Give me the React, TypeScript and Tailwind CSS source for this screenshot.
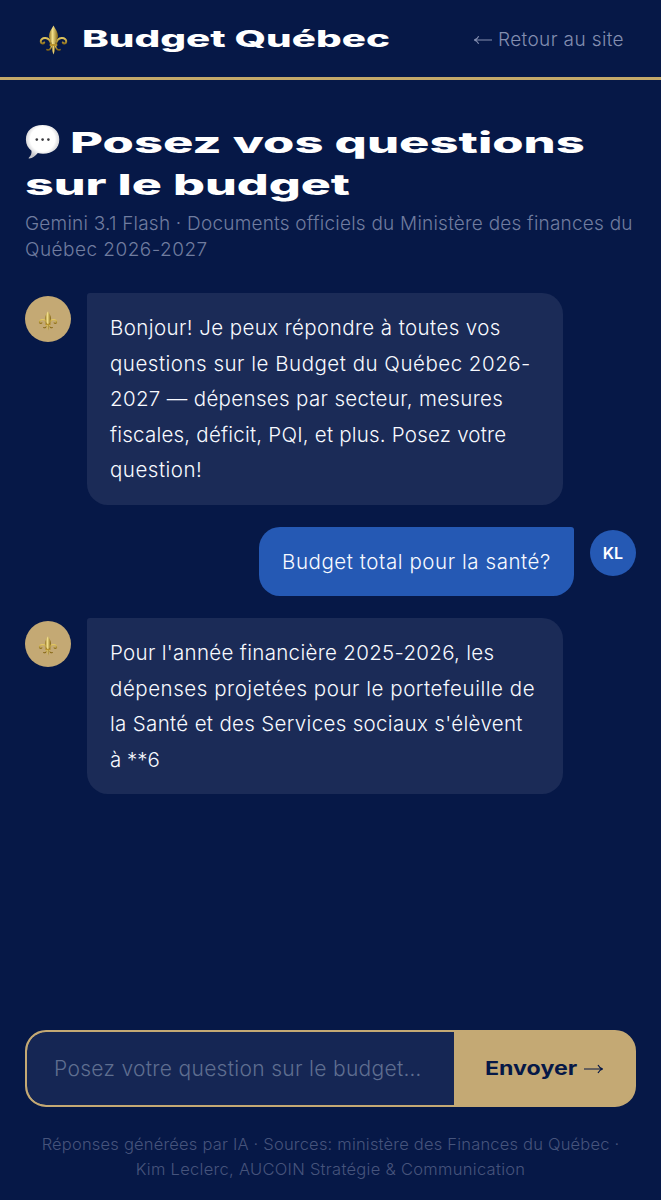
import { useState } from 'react'
import type { ReactNode } from 'react'

type Line = { text: string; tracking: string }

type Message = {
  id: number
  role: 'bot' | 'user'
  lines: Line[]
}

const MESSAGES: Message[] = [
  {
    id: 1,
    role: 'bot',
    lines: [
      { text: 'Bonjour! Je peux répondre à toutes vos', tracking: 'tracking-[0.41px]' },
      { text: 'questions sur le Budget du Québec 2026-', tracking: 'tracking-[0.51px]' },
      { text: '2027 — dépenses par secteur, mesures', tracking: 'tracking-[0.34px]' },
      { text: 'fiscales, déficit, PQI, et plus. Posez votre', tracking: 'tracking-[0.22px]' },
      { text: 'question!', tracking: 'tracking-[0.5px]' },
    ],
  },
  { id: 2, role: 'user', lines: [{ text: 'Budget total pour la santé?', tracking: 'tracking-[0.57px]' }] },
  {
    id: 3,
    role: 'bot',
    lines: [
      { text: "Pour l'année financière 2025-2026, les", tracking: 'tracking-[0.31px]' },
      { text: 'dépenses projetées pour le portefeuille de', tracking: 'tracking-[0.54px]' },
      { text: "la Santé et des Services sociaux s'élèvent", tracking: 'tracking-[0.33px]' },
      { text: 'à **6', tracking: 'tracking-normal' },
    ],
  },
]

function FleurDeLis({ className }: { className: string }) {
  return (
    <svg viewBox="0 0 28 30" className={className}>
      <defs>
        <linearGradient id="petal" x1="0" y1="0" x2="1" y2="0">
          <stop offset="0" stopColor="#8f6f1e" />
          <stop offset="0.4" stopColor="#f3e08a" />
          <stop offset="1" stopColor="#80600f" />
        </linearGradient>
        <linearGradient id="scroll" x1="0" y1="0" x2="0" y2="1">
          <stop offset="0" stopColor="#e3c860" />
          <stop offset="1" stopColor="#80600f" />
        </linearGradient>
      </defs>
      <g fill="none" stroke="url(#scroll)" strokeLinecap="round">
        <path d="M11.800 20C11 15.500 8.700 13 5.700 13C2.700 13 1 14.800 1.300 16.800C1.600 18.800 4 19.100 4.700 17.500" strokeWidth="2" />
        <path d="M16.200 20C17 15.500 19.300 13 22.300 13C25.300 13 27 14.800 26.700 16.800C26.400 18.800 24 19.100 23.300 17.500" strokeWidth="2" />
        <path d="M12 21C11.500 24.300 9.500 25.700 7.500 24.700M16 21C16.500 24.300 18.500 25.700 20.500 24.700" strokeWidth="1.600" />
      </g>
      <path d="M14 .5C12 4 9.400 7.500 9.400 11C9.400 14 11.800 16 12.400 19.500H15.600C16.200 16 18.600 14 18.600 11C18.600 7.500 16 4 14 .5Z" fill="url(#petal)" />
      <rect x="10" y="19" width="8" height="2" rx="1" fill="#b8922c" />
      <path d="M12.500 21H15.500L15.300 26L14 29.500L12.700 26Z" fill="url(#petal)" />
    </svg>
  )
}

function SpeechBubble() {
  return (
    <svg viewBox="0 0 36 36" className="mb-[2px] h-[36px] w-[36px] shrink-0">
      <defs>
        <radialGradient id="bubble" cx="0.5" cy="0.42" r="0.56">
          <stop offset="0.65" stopColor="#ffffff" />
          <stop offset="1" stopColor="#c4c4c8" />
        </radialGradient>
      </defs>
      <path d="M17.500 1C27.500 1 34.300 6.500 34.300 15.500C34.300 24.500 27.500 29.700 18 29.700C16 29.700 14.300 29.500 12.800 29.100C10.500 32 7.500 34.300 4.300 34.600C3.500 34.600 3.400 34 4 33.500C6 31.700 6.700 29.500 6.500 26.700C3 24.200 .9 20.500 .9 15.500C.9 6.500 7.700 1 17.500 1Z" fill="url(#bubble)" />
      <circle cx="11.800" cy="15.600" r="1.300" fill="#3b3b3f" />
      <circle cx="17.600" cy="15.600" r="1.300" fill="#3b3b3f" />
      <circle cx="23.400" cy="15.600" r="1.300" fill="#3b3b3f" />
    </svg>
  )
}

function Arrow({ className }: { className: string }) {
  return (
    <svg viewBox="0 0 20 12" className={className} fill="none" stroke="currentColor" strokeWidth="1.200">
      <path d="M0 6H18.500M14 2C15 4 16.500 5.500 18.800 6C16.500 6.500 15 8 14 10" />
    </svg>
  )
}

// extended display lettering
function Wide({ className, children }: { className: string; children: ReactNode }) {
  return <span className={`inline-block origin-left whitespace-nowrap ${className}`}>{children}</span>
}

function ChatMessage({ message }: { message: Message }) {
  const isUser = message.role === 'user'
  return (
    <div className={`flex items-start gap-4 ${isUser ? 'flex-row-reverse' : ''}`}>
      <div className={`mt-[3px] flex h-[46px] w-[46px] shrink-0 items-center justify-center rounded-full ${isUser ? 'bg-[#2559b4]' : 'bg-[#c4a974]'}`}>
        {isUser
          ? <span className="text-[16px] font-semibold text-white">KL</span>
          : <FleurDeLis className="mt-[4px] h-[20px] w-[20px]" />}
      </div>
      <div className={`px-[23px] py-[17px] text-[20.5px] leading-[35.5px] font-light text-[#f8faff] ${isUser ? 'w-[315px] rounded-[21px] rounded-tr-[3px] bg-[#2559b4]' : 'w-[476px] rounded-[21px] rounded-tl-[3px] bg-[#1b2b57]'}`}>
        {message.lines.map(l => (
          <div key={l.text} className={`whitespace-nowrap ${l.tracking}`}>{l.text}</div>
        ))}
      </div>
    </div>
  )
}

export default function App() {
  const [question, setQuestion] = useState('')

  return (
    <div className="flex h-[1200px] w-full flex-col bg-[#061847] font-['Inter',sans-serif]">
      <header className="flex h-[80px] shrink-0 items-center justify-between border-b-[3px] border-[#c4a96a] pt-[2px] pr-[37px] pl-[39px]">
        <div className="flex items-center gap-[14px]">
          <FleurDeLis className="h-[30px] w-[29px]" />
          <Wide className="scale-x-[1.755] text-[23px] font-extrabold text-white">Budget Québec</Wide>
        </div>
        <div className="flex items-center gap-[6px] text-[19px] font-light text-[#838eb0]">
          <Arrow className="h-[12px] w-[19px] rotate-180" />
          <span className="pt-[2px] tracking-[0.38px]">Retour au site</span>
        </div>
      </header>

      <main className="flex flex-1 flex-col px-[25px] pt-[42px]">
        <h1 className="text-[29px] leading-[42px] font-extrabold text-white">
          <span className="flex h-[42px] items-center gap-[9px]">
            <SpeechBubble />
            <Wide className="scale-x-[1.747]">Posez vos questions</Wide>
          </span>
          <Wide className="scale-x-[1.729]">sur le budget</Wide>
        </h1>
        <p className="mt-[5px] text-[19px] leading-[26px] font-light whitespace-nowrap text-[#707c9f]">
          <span className="tracking-[0.22px]">Gemini 3.1 Flash · Documents officiels du Ministère des finances du</span><br />
          <span className="tracking-[0.47px]">Québec 2026-2027</span>
        </p>

        <div className="mt-[30px] flex flex-1 flex-col gap-[22px]">
          {MESSAGES.map(m => <ChatMessage key={m.id} message={m} />)}
        </div>

        <form className="flex h-[77px] shrink-0 overflow-hidden rounded-[21px] border-2 border-[#c4a974] bg-[#c4a974]" onSubmit={e => e.preventDefault()}>
          <input
            value={question}
            onChange={e => setQuestion(e.target.value)}
            placeholder="Posez votre question sur le budget…"
            className="min-w-0 flex-1 rounded-l-[19px] bg-[#152654] pl-[27px] text-[21px] font-light tracking-[0.31px] text-white outline-none placeholder:text-[#5f6e90]"
          />
          <button type="submit" className="flex w-[180px] items-center bg-[#c4a974] pl-[31px] text-[#061847]">
            <Wide className="scale-x-[1.22] pt-[2px] text-[19px] font-bold">Envoyer</Wide>
            <Arrow className="ml-[23px] h-[12px] w-[20px]" />
          </button>
        </form>

        <footer className="mt-[25px] h-[68px] shrink-0 text-center text-[16.5px] leading-[25px] font-light whitespace-nowrap text-[#46547c]">
          <span className="tracking-[0.2px]">Réponses générées par IA · Sources: ministère des Finances du Québec ·</span><br />
          <span className="tracking-[0.29px]">Kim Leclerc, AUCOIN Stratégie &amp; Communication</span>
        </footer>
      </main>
    </div>
  )
}
